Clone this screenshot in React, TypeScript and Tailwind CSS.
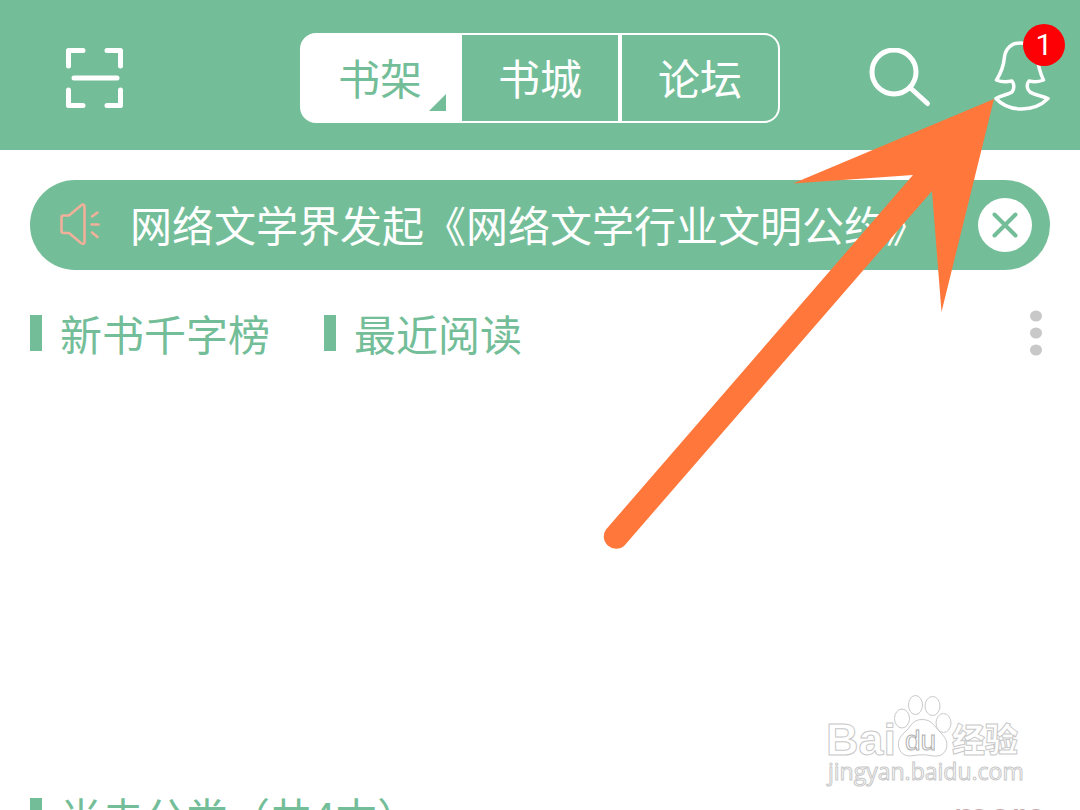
import React, { useState } from 'react';

const tabs = ['书架', '书城', '论坛'];

const ScanIcon: React.FC = () => (
  <svg width="60" height="64" viewBox="0 0 60 64" fill="none" stroke="white" strokeWidth="5" strokeLinecap="round" strokeLinejoin="round" aria-hidden="true">
    <path d="M3.500 20V4.500H18M42 4.500H55.500V20M3.500 44V59.500H18M42 59.500H55.500V44" />
    <path d="M9 32H52" />
  </svg>
);

const SearchIcon: React.FC = () => (
  <svg width="64" height="60" viewBox="0 2 64 60" fill="none" stroke="white" strokeWidth="5" strokeLinecap="round" aria-hidden="true">
    <circle cx="26" cy="26" r="22" />
    <path d="M43 42.500L59.500 57.500" />
  </svg>
);

const ProfileIcon: React.FC = () => (
  <svg width="60" height="74" viewBox="0 0 60 74" fill="none" stroke="white" strokeWidth="3.500" strokeLinecap="round" strokeLinejoin="round" aria-hidden="true">
    <path d="M30 2C21 2 15.500 8 14.500 16C13.500 26 11 32 6.500 39C11 41 17 41 22 40C24.500 43 24.500 48 22 51C17 54 11 54.500 6 57.500C19 71.500 44 71.500 58 57.500C52 54.500 45 54.500 40 51C36.500 48 36.500 43 39 40C44 41 49 41 53.500 39C50 32 48.500 26 47 16C45.500 8 40 2 30 2Z" />
  </svg>
);

const SpeakerIcon: React.FC = () => (
  <svg width="40" height="44" viewBox="0 0 40 44" fill="none" stroke="#f0b09a" strokeWidth="2.600" strokeLinecap="round" strokeLinejoin="round" className="shrink-0" aria-hidden="true">
    <path d="M3.500 12.500H9L21 2.500C23 1 24.500 1.500 24.500 3.500V39C24.500 41 23 41.500 21 40L9 30H3.500C2 30 1.500 29.500 1.500 28V14.500C1.500 13 2 12.500 3.500 12.500Z" />
    <path d="M32 13.500L37.500 9.500M31.500 21.500H38.500M32 29.500L37.500 34" />
  </svg>
);

const CloseIcon: React.FC = () => (
  <svg width="26" height="26" viewBox="0 0 26 26" fill="none" stroke="#73be98" strokeWidth="4" strokeLinecap="round" aria-hidden="true">
    <path d="M2.500 2.500L23.500 23.500M23.500 2.500L2.500 23.500" />
  </svg>
);

const MoreIcon: React.FC = () => (
  <svg width="14" height="46" viewBox="0 0 14 46" fill="#c8c8c8" aria-hidden="true">
    <ellipse cx="7" cy="6" rx="6" ry="5.500" />
    <ellipse cx="7" cy="23" rx="6" ry="5.500" />
    <ellipse cx="7" cy="40" rx="6" ry="5.500" />
  </svg>
);

const SectionTitle: React.FC<{ children: React.ReactNode }> = ({ children }) => (
  <h2 className="flex items-center gap-[18px] text-[42px] leading-[60px] font-normal whitespace-nowrap">
    <span className="h-9 w-3 bg-[#73be98]" />
    {children}
  </h2>
);

const Arrow: React.FC = () => (
  <svg width="400" height="460" viewBox="600 96 400 460" className="pointer-events-none absolute top-24 right-20 z-10" aria-hidden="true">
    <path
      d="M994 99L793 183.500L913 175L606 529.500A12.300 12.300 0 0 0 624.500 545.500L932 191L941.500 312Z"
      fill="#ff773b"
    />
  </svg>
);

const Watermark: React.FC = () => (
  <svg
    width="210"
    height="100"
    viewBox="820 690 210 100"
    fill="white"
    stroke="#c9c9c9"
    strokeWidth="1"
    className="pointer-events-none absolute right-[50px] bottom-5"
    aria-label="Baidu"
  >
    <g fontFamily="Liberation Sans, Noto Sans CJK SC, sans-serif" fontWeight="700">
      <text x="826" y="755" fontSize="45">Bai</text>
      <ellipse cx="902" cy="718.500" rx="7.500" ry="9.500" />
      <ellipse cx="915.500" cy="705" rx="7" ry="9.500" />
      <ellipse cx="932.500" cy="706" rx="7.500" ry="9.500" />
      <ellipse cx="943.500" cy="723" rx="7.500" ry="9.500" />
      <path d="M922 719.500C912 719.500 911 727 905 732C899 737 897.500 742 899 748C901.500 756 908 756.500 914 755.500C920 754.500 925 754.500 930 755.500C938 757 944 756 946.500 748C948 741 945 737 940 732C934 726 932 719.500 922 719.500Z" />
      <text x="905" y="750" fontSize="28" fontWeight="400" stroke="#b0b0b0">du</text>
      <text x="952" y="752" fontSize="33" fontWeight="900" fontFamily="Noto Sans CJK SC, sans-serif">经验</text>
    </g>
    <text x="828" y="780" fontSize="23" fontFamily="Open Sans, Noto Sans, sans-serif">jingyan.baidu.com</text>
  </svg>
);

const App: React.FC = () => {
  const [activeTab, setActiveTab] = useState('书架');
  const [noticeOpen, setNoticeOpen] = useState(true);

  return (
    <div className="relative flex h-screen flex-col overflow-hidden bg-white font-['Noto_Sans_CJK_SC',sans-serif] text-[#73be98]">
      <header className="grid h-[150px] shrink-0 grid-cols-[1fr_auto_1fr] items-center bg-[#73be98] px-[30px] pt-1.5">
        <button type="button" aria-label="扫一扫" className="ml-[35px] justify-self-start">
          <ScanIcon />
        </button>

        <nav className="flex h-[90px] w-[480px] overflow-hidden rounded-2xl border-2 border-white bg-white">
          {tabs.map((tab) => (
            <button
              key={tab}
              type="button"
              onClick={() => setActiveTab(tab)}
              className={`relative flex-1 border-l-4 border-white pb-0.5 text-[42px] leading-[60px] first:border-l-0 ${
                tab === activeTab ? 'bg-white text-[#73be98]' : 'bg-[#73be98] text-white'
              }`}
            >
              {tab}
              {tab === activeTab && (
                <svg width="17" height="17" viewBox="0 0 17 17" className="absolute right-3 bottom-2.5" aria-hidden="true">
                  <path d="M17 0V17H0Z" fill="#73be98" />
                </svg>
              )}
            </button>
          ))}
        </nav>

        <div className="flex items-center gap-[58px] justify-self-end">
          <button type="button" aria-label="搜索">
            <SearchIcon />
          </button>
          <button type="button" aria-label="我的" className="relative">
            <ProfileIcon />
            <span className="absolute -top-[17px] -right-[15px] flex size-[42px] items-center justify-center rounded-full bg-[#fd0006] font-['Roboto',sans-serif] text-[30px] leading-none text-white">
              1
            </span>
          </button>
        </div>
      </header>

      <main className="px-[30px] pt-[30px]">
        {noticeOpen && (
          <div className="flex h-[90px] items-center rounded-full bg-[#73be98] pr-[18px] pl-[30px]">
            <SpeakerIcon />
            <p className="ml-[30px] min-w-0 flex-1 overflow-hidden pb-0.5 text-[42px] leading-[60px] whitespace-nowrap text-white">
              网络文学界发起《网络文学行业文明公约》
            </p>
            <button
              type="button"
              aria-label="关闭"
              onClick={() => setNoticeOpen(false)}
              className="flex size-[54px] shrink-0 items-center justify-center rounded-full bg-white"
            >
              <CloseIcon />
            </button>
          </div>
        )}

        <section className="mt-[33px] min-h-[483px]">
          <div className="flex items-center">
            <SectionTitle>新书千字榜</SectionTitle>
            <div className="ml-[54px]">
              <SectionTitle>最近阅读</SectionTitle>
            </div>
            <button type="button" aria-label="更多" className="mr-[7px] ml-auto">
              <MoreIcon />
            </button>
          </div>
        </section>

        <section className="flex items-start justify-between">
          <SectionTitle>尚未分类（共4本）</SectionTitle>
          <a href="#more" className="mr-1 pt-0.5 font-['Roboto',sans-serif] text-[40px] leading-[60px] text-[#c9a9ad]">
            more
          </a>
        </section>
      </main>

      <Watermark />
      <Arrow />
    </div>
  );
};

export default App;
